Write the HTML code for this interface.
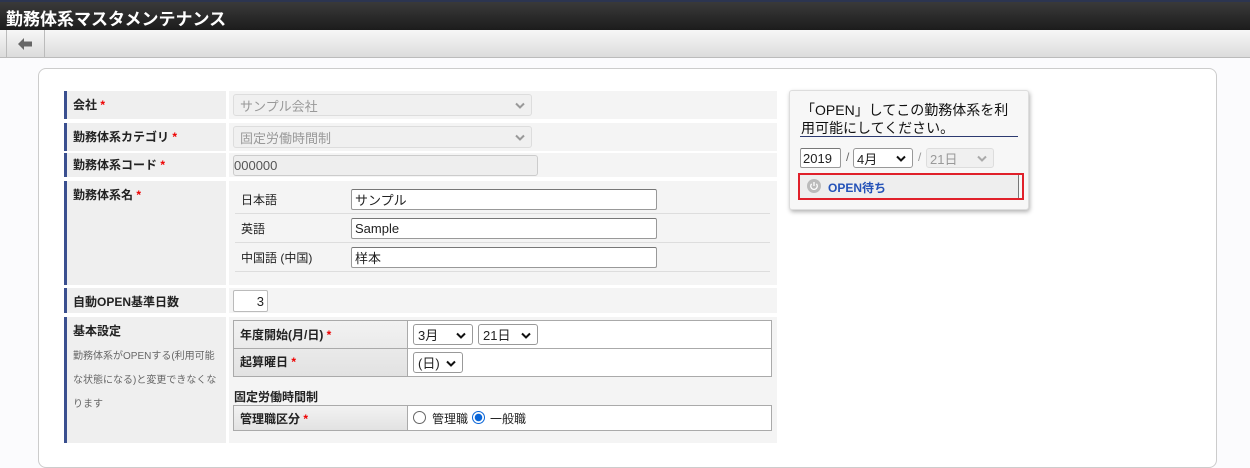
<!DOCTYPE html>
<html><head><meta charset="utf-8"><style>
*{box-sizing:border-box;margin:0;padding:0}
body{width:1250px;height:448px;overflow:hidden;background:#fbfbfd;font-family:"Liberation Sans","Noto Sans CJK JP",sans-serif;font-size:12px;color:#222;position:relative}
.a{position:absolute}
.hdr{left:0;top:0;width:1250px;height:30px;background:linear-gradient(#3a3a3a,#1c1c1c);border-top:2px solid #2c3550}
.hdr span{position:absolute;left:6px;top:3px;color:#fff;font-size:17px;font-weight:bold}
.tb{left:0;top:30px;width:1250px;height:28px;background:linear-gradient(#f7f7f7,#dcdcdc);border-bottom:1px solid #bbb}
.lab{background:#efefef;border-left:3px solid #3a4f8f;font-weight:bold;font-size:12px;padding:5px 0 0 6px}
.val{background:#f4f4f4}
.st{color:#e00}
.f{display:flex;align-items:center}
.sel{border:1px solid #ddd;border-radius:3px;background:#f0f0f0;color:#999;font-size:13px;padding:0 6px}
.inp{border:1px solid #999;border-top-color:#777;border-radius:2px;background:#fff;font-size:13px;padding:0 3px}
.dd{border:1px solid #999;border-radius:3px;background:#fff;font-size:13px;padding:0 4px}
.chev{position:absolute;right:6px;top:50%;margin-top:-3px;width:10px;height:7px}
</style></head><body>
<svg width="0" height="0" style="position:absolute"><defs><symbol id="cv" viewBox="0 0 10 7"><polyline points="1,1.5 5,5.5 9,1.5" fill="none" stroke="currentColor" stroke-width="2"/></symbol></defs></svg>
<div class="a hdr"><span>勤務体系マスタメンテナンス</span></div>
<div class="a tb"><div class="a" style="left:6px;top:0;width:39px;height:28px;border-left:1px solid #bbb;border-right:1px solid #bbb"></div>
<svg class="a" style="left:18px;top:8px" width="15" height="12" viewBox="0 0 15 12"><path d="M0 6 L6 0 L6 3.5 L14 3.5 L14 8.5 L6 8.5 L6 12 Z" fill="#666"/></svg></div>
<div class="a" style="left:38px;top:68px;width:1179px;height:400px;border:1px solid #ccc;border-radius:8px;background:#fff"></div>

<div class="a lab" style="left:64px;top:91px;width:162px;height:28px">会社 <span class="st">*</span></div>
<div class="a val" style="left:229px;top:91px;width:548px;height:28px"></div>
<div class="a sel f" style="left:233px;top:94px;width:299px;height:22px">サンプル会社<svg class="chev" style="color:#999"><use href="#cv"/></svg></div>
<div class="a lab" style="left:64px;top:123px;width:162px;height:28px">勤務体系カテゴリ <span class="st">*</span></div>
<div class="a val" style="left:229px;top:123px;width:548px;height:28px"></div>
<div class="a sel f" style="left:233px;top:126px;width:299px;height:22px">固定労働時間制<svg class="chev" style="color:#999"><use href="#cv"/></svg></div>
<div class="a lab" style="left:64px;top:153px;width:162px;height:24px;padding-top:3px">勤務体系コード <span class="st">*</span></div>
<div class="a val" style="left:229px;top:153px;width:548px;height:24px"></div>
<div class="a sel f" style="left:233px;top:155px;width:305px;height:21px;border-color:#ccc;background:#eee;color:#555;padding:0">000000</div>
<div class="a lab" style="left:64px;top:181px;width:162px;height:104px">勤務体系名 <span class="st">*</span></div>
<div class="a val" style="left:229px;top:181px;width:548px;height:104px"></div>
<div class="a" style="left:241px;top:191px">日本語</div>
<div class="a" style="left:241px;top:220px">英語</div>
<div class="a" style="left:241px;top:249px">中国語 (中国)</div>
<div class="a" style="left:235px;top:213px;width:535px;border-top:1px solid #ddd"></div>
<div class="a" style="left:235px;top:242px;width:535px;border-top:1px solid #ddd"></div>
<div class="a" style="left:235px;top:271px;width:535px;border-top:1px solid #ddd"></div>
<div class="a inp f" style="left:351px;top:189px;width:306px;height:21px">サンプル</div>
<div class="a inp f" style="left:351px;top:218px;width:306px;height:21px">Sample</div>
<div class="a inp f" style="left:351px;top:247px;width:306px;height:21px">样本</div>
<div class="a lab" style="left:64px;top:288px;width:162px;height:25px">自動OPEN基準日数</div>
<div class="a val" style="left:229px;top:288px;width:548px;height:25px"></div>
<div class="a inp f" style="left:233px;top:290px;width:35px;height:22px;justify-content:flex-end;border-color:#bbb">3</div>
<div class="a lab" style="left:64px;top:317px;width:162px;height:126px">基本設定<div style="font-weight:normal;font-size:10px;color:#666;line-height:24px;margin-top:6px;width:150px">勤務体系がOPENする(利用可能な状態になる)と変更できなくなります</div></div>
<div class="a val" style="left:229px;top:317px;width:548px;height:126px"></div>
<div class="a" style="left:233px;top:320px;width:539px;height:57px;border:1px solid #aaa;background:#fff"></div>
<div class="a" style="left:234px;top:321px;width:174px;height:55px;background:linear-gradient(#f2f2f2,#e2e2e2);border-right:1px solid #aaa"></div>
<div class="a" style="left:234px;top:348px;width:537px;border-top:1px solid #aaa"></div>
<div class="a" style="left:240px;top:326px;font-weight:bold">年度開始(月/日) <span class="st">*</span></div>
<div class="a" style="left:240px;top:353px;font-weight:bold">起算曜日 <span class="st">*</span></div>
<div class="a dd f" style="left:413px;top:324px;width:60px;height:21px">3月<svg class="chev" style="color:#111"><use href="#cv"/></svg></div>
<div class="a dd f" style="left:478px;top:324px;width:60px;height:21px">21日<svg class="chev" style="color:#111"><use href="#cv"/></svg></div>
<div class="a dd f" style="left:413px;top:352px;width:50px;height:21px">(日)<svg class="chev" style="color:#111"><use href="#cv"/></svg></div>
<div class="a" style="left:234px;top:388px;font-weight:bold">固定労働時間制</div>
<div class="a" style="left:233px;top:405px;width:539px;height:26px;border:1px solid #aaa;background:#fff"></div>
<div class="a" style="left:234px;top:406px;width:174px;height:24px;background:linear-gradient(#f2f2f2,#e2e2e2);border-right:1px solid #aaa"></div>
<div class="a" style="left:240px;top:410px;font-weight:bold">管理職区分 <span class="st">*</span></div>
<div class="a" style="left:413px;top:411px;width:13px;height:13px;border:1px solid #666;border-radius:50%"></div>
<div class="a" style="left:432px;top:410px">管理職</div>
<div class="a" style="left:472px;top:411px;width:13px;height:13px;border:1px solid #0a66d8;border-radius:50%;background:radial-gradient(#0a66d8 3.5px,#fff 4px)"></div>
<div class="a" style="left:490px;top:410px">一般職</div>

<div class="a" style="left:789px;top:90px;width:240px;height:120px;background:#f7f7f7;border:1px solid #ddd;border-radius:3px;box-shadow:1px 2px 4px rgba(0,0,0,.3)"></div>
<div class="a" style="left:801px;top:101px;font-size:14px;line-height:18px;width:220px;color:#111">「OPEN」してこの勤務体系を利用可能にしてください。</div>
<div class="a" style="left:800px;top:136px;width:218px;border-top:1px solid #2c3a70"></div>
<div class="a inp f" style="left:800px;top:148px;width:41px;height:20px;font-size:13px;padding:0 2px">2019</div>
<div class="a" style="left:846px;top:150px;color:#666">/</div>
<div class="a dd f" style="left:853px;top:148px;width:60px;height:20px;padding:0 3px">4月<svg class="chev" style="color:#111"><use href="#cv"/></svg></div>
<div class="a" style="left:918px;top:150px;color:#999">/</div>
<div class="a sel f" style="left:926px;top:148px;width:68px;height:20px;padding:0 3px">21日<svg class="chev" style="color:#aaa"><use href="#cv"/></svg></div>
<div class="a" style="left:798px;top:173px;width:226px;height:27px;border:2px solid #e0202a"></div>
<div class="a" style="left:800px;top:175px;width:219px;height:23px;background:#eee;border-right:1px solid #777"></div>
<svg class="a" style="left:807px;top:179px" width="14" height="14" viewBox="0 0 14 14"><circle cx="7" cy="7" r="7" fill="#bbb"/><path d="M4.6 4.8 A3.3 3.3 0 1 0 9.4 4.8" fill="none" stroke="#fff" stroke-width="1.3"/><line x1="7" y1="3" x2="7" y2="7" stroke="#fff" stroke-width="1.3"/></svg>
<div class="a" style="left:828px;top:179px;color:#2452b8;font-weight:bold">OPEN待ち</div>
</body></html>
